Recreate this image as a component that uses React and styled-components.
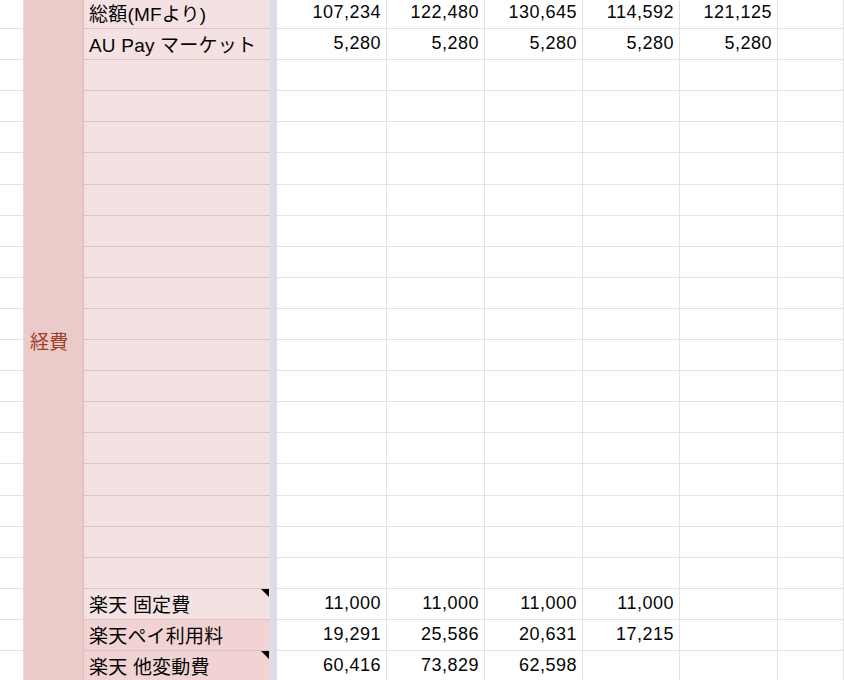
import React from "react";
import styled, { createGlobalStyle } from "styled-components";

const GlobalStyle = createGlobalStyle`
  html, body {
    margin: 0;
    padding: 0;
    background: #ffffff;
    overflow: hidden;
  }
`;

const rows = [
  { label: "総額(MFより)", values: ["107,234", "122,480", "130,645", "114,592", "121,125", ""] },
  { label: "AU Pay マーケット", values: ["5,280", "5,280", "5,280", "5,280", "5,280", ""] },
  ...Array.from({ length: 17 }, () => ({ label: "", values: ["", "", "", "", "", ""] })),
  { label: "楽天 固定費", note: true, values: ["11,000", "11,000", "11,000", "11,000", "", ""] },
  { label: "楽天ペイ利用料", dark: true, values: ["19,291", "25,586", "20,631", "17,215", "", ""] },
  { label: "楽天 他変動費", note: true, dark: true, values: ["60,416", "73,829", "62,598", "", "", ""] },
];

const Sheet = styled.div`
  display: grid;
  grid-template-columns: 24px 60px 186px 7px 110px 98px 98px 97px 98px 1fr;
  grid-template-rows: repeat(${rows.length}, 31.1px);
  width: 844px;
  margin-top: -2px;
  font-family: "Liberation Sans", "Noto Sans CJK JP", sans-serif;
  color: #050505;
`;

const GutterCell = styled.div`
  box-sizing: border-box;
  border-right: 1px solid #dedede;
  border-bottom: 1px solid #e2e2e2;
`;

const CategoryCell = styled.div`
  grid-column: 2;
  grid-row: 1 / span ${rows.length};
  box-sizing: border-box;
  display: flex;
  align-items: center;
  padding-left: 6px;
  background: #ebcaca;
  border-right: 1px solid #dcbfbf;
  color: #a0402c;
  font-family: "Noto Sans CJK JP", sans-serif;
  font-size: 19px;
  letter-spacing: 0.3px;
`;

const FreezeBar = styled.div`
  grid-column: 4;
  grid-row: 1 / span ${rows.length};
  background: #dadee8;
`;

const LabelCell = styled.div`
  position: relative;
  box-sizing: border-box;
  display: flex;
  align-items: center;
  padding-left: 5px;
  padding-bottom: 1px;
  background: ${(p) => (p.$dark ? "#f1d3d3" : "#f4e2e2")};
  border-bottom: 1px solid #dcc4c4;
  font-size: 19px;
  letter-spacing: 0.2px;
  white-space: nowrap;
  overflow: hidden;
`;

const NoteMark = styled.span`
  position: absolute;
  top: 0;
  right: 1px;
  width: 0;
  height: 0;
  border-top: 8px solid #000;
  border-left: 8px solid transparent;
`;

const ValueCell = styled.div`
  box-sizing: border-box;
  display: flex;
  align-items: center;
  justify-content: flex-end;
  padding-right: 5px;
  padding-bottom: 1px;
  border-right: 1px solid #e1e1e1;
  border-bottom: 1px solid #e3e3e3;
  font-size: 18px;
  letter-spacing: 0.5px;
  white-space: nowrap;
`;

export default function App() {
  return (
    <>
      <GlobalStyle />
      <Sheet>
        <CategoryCell>経費</CategoryCell>
        <FreezeBar />
        {rows.map((row, i) => (
          <React.Fragment key={i}>
            <GutterCell />
            <LabelCell $dark={row.dark}>
              {row.label}
              {row.note && <NoteMark />}
            </LabelCell>
            {row.values.map((v, j) => (
              <ValueCell key={j}>{v}</ValueCell>
            ))}
          </React.Fragment>
        ))}
      </Sheet>
    </>
  );
}
